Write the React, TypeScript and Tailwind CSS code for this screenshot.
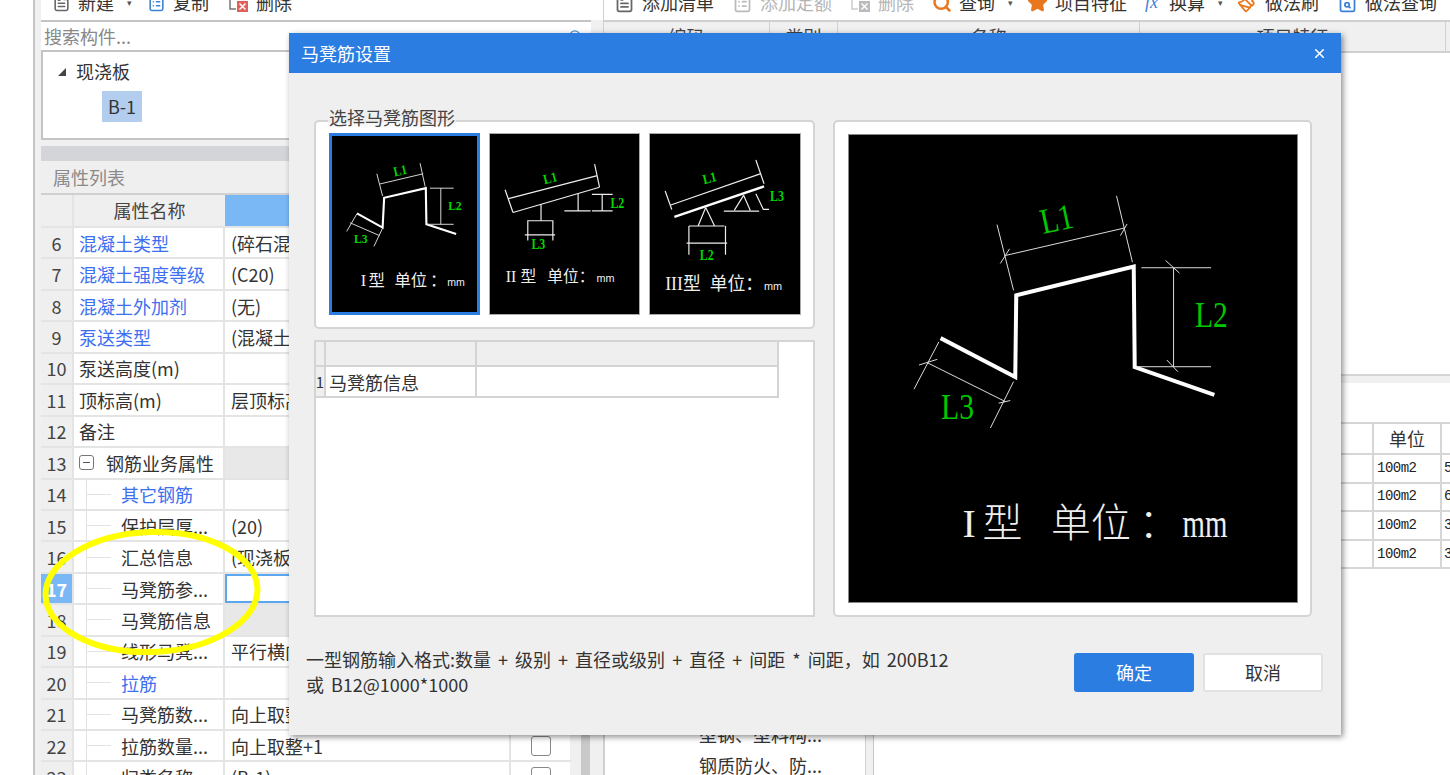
import { FileText, ClipboardList, Search, Star, Paintbrush, FileSearch, X } from "lucide-react";

type Row = {
  n: number;
  name: string;
  value?: string;
  link?: boolean;
  child?: boolean;
  group?: boolean;
  gray?: boolean;
  selected?: boolean;
  check?: boolean;
};

const rows: Row[] = [
  { n: 6, name: "混凝土类型", value: "(碎石混凝土)", link: true },
  { n: 7, name: "混凝土强度等级", value: "(C20)", link: true },
  { n: 8, name: "混凝土外加剂", value: "(无)", link: true },
  { n: 9, name: "泵送类型", value: "(混凝土泵)", link: true },
  { n: 10, name: "泵送高度(m)" },
  { n: 11, name: "顶标高(m)", value: "层顶标高" },
  { n: 12, name: "备注" },
  { n: 13, name: "钢筋业务属性", group: true, gray: true },
  { n: 14, name: "其它钢筋", child: true, link: true },
  { n: 15, name: "保护层厚...", value: "(20)", child: true },
  { n: 16, name: "汇总信息", value: "(现浇板)", child: true },
  { n: 17, name: "马凳筋参...", child: true, selected: true },
  { n: 18, name: "马凳筋信息", child: true, gray: true },
  { n: 19, name: "线形马凳...", value: "平行横向受力筋", child: true },
  { n: 20, name: "拉筋", child: true, link: true },
  { n: 21, name: "马凳筋数...", value: "向上取整+1", child: true },
  { n: 22, name: "拉筋数量...", value: "向上取整+1", child: true, check: true },
  { n: 23, name: "归类名称", value: "(B-1)", child: true, check: true },
];

const units = ["5", "6", "3", "3"];

function DeleteIcon({ muted }: { muted?: boolean }) {
  return (
    <svg width="21" height="21" viewBox="0 0 21 21" className="shrink-0">
      <path d="M2 3H11M2 3V17H8" fill="none" stroke={muted ? "#ccc" : "#777"} strokeWidth="1.5" />
      <rect x="9" y="9" width="11" height="11" fill={muted ? "#bbb" : "#e0605a"} />
      <path d="M11.5 11.5 17.5 17.5M17.5 11.5 11.5 17.5" stroke="#fff" strokeWidth="1.5" />
    </svg>
  );
}

function ToolItem({ icon, label, caret, muted }: { icon: React.ReactNode; label: string; caret?: boolean; muted?: boolean }) {
  return (
    <div className="flex items-center gap-[7px]">
      {icon}
      <span className={muted ? "text-[#b5b5b5]" : "text-[#333]"}>{label}</span>
      {caret && <span className="-mr-[4px] ml-[6px] text-[9px] text-[#555]">▾</span>}
    </div>
  );
}

function PropertyRow({ row }: { row: Row }) {
  return (
    <div className="flex h-[31.45px] shrink-0 border-b-2 border-[#e4e4e4] text-[18px] leading-none">
      <div
        className={`flex w-[33px] shrink-0 items-center justify-center border-r-2 border-[#e4e4e4] ${
          row.selected ? "bg-[#7ab8f5] font-bold text-white" : "bg-[#efefef] text-[#444]"
        }`}
      >
        {row.n}
      </div>
      <div className="flex w-[151px] shrink-0 items-center border-r-2 border-[#e4e4e4] bg-white">
        {row.child && (
          <span className="ml-[12px] flex w-[25px] items-center self-stretch border-l border-[#e3e3e3]">
            <span className="h-px w-full bg-[#e3e3e3]" />
          </span>
        )}
        {row.group && (
          <span className="ml-[5px] flex h-[15px] w-[15px] items-center justify-center rounded-[3px] border border-[#777]">
            <span className="h-px w-[7px] bg-[#555]" />
          </span>
        )}
        <span
          className={`${row.child ? "ml-[10px]" : row.group ? "ml-[12px]" : "ml-[5px]"} whitespace-nowrap ${
            row.link ? "text-[#3d6ff0]" : "text-[#333]"
          }`}
        >
          {row.name}
        </span>
      </div>
      <div
        className={`flex w-[284px] shrink-0 items-center overflow-hidden whitespace-nowrap pl-[6px] text-[#333] ${
          row.gray ? "bg-[#e8e8e8]" : "bg-white"
        } ${row.selected ? "border-2 border-[#5ba7f0]" : ""}`}
      >
        {row.value}
      </div>
      <div className={`flex w-[61px] shrink-0 items-center justify-center border-l-2 border-[#e4e4e4] ${row.gray ? "bg-[#e8e8e8]" : "bg-white"}`}>
        {row.check && <span className="h-[20px] w-[20px] rounded-[3px] border border-[#888] bg-white" />}
      </div>
    </div>
  );
}

// the big drawing has narrow, tall labels, the thumbnails small heavy ones
function Label({ x, y, rotate, size, children }: { x: number; y: number; rotate?: number; size: number; children: string }) {
  const big = size > 20;
  return (
    <text
      x={x}
      y={y}
      fill={big ? "#00c800" : "#00d800"}
      fontSize={size}
      fontWeight={big ? 400 : 700}
      textAnchor="middle"
      textLength={big ? 33 : 14}
      lengthAdjust="spacingAndGlyphs"
      fontFamily="'Liberation Serif', serif"
      transform={rotate ? `rotate(${rotate} ${x} ${y})` : undefined}
    >
      {children}
    </text>
  );
}

function Caption({ parts, y, size, mono }: { parts: [number, string][]; y: number; size: number; mono: number }) {
  const big = size > 20;
  return (
    <g fill="#eee">
      {parts.map(([x, t]) => {
        const isMm = t === "mm";
        const latin = /[Im]/.test(t);
        return (
          <text
            key={t}
            x={x}
            y={y}
            fontSize={isMm ? mono : size}
            textLength={isMm && big ? 45 : undefined}
            lengthAdjust="spacingAndGlyphs"
            fontFamily={
              isMm && !big
                ? "'Liberation Sans', sans-serif"
                : latin
                  ? "'Liberation Serif', serif"
                  : "'Noto Sans CJK SC', sans-serif"
            }
            fontWeight={big ? 300 : 400}
          >
            {t}
          </text>
        );
      })}
    </g>
  );
}

function ShapeOne() {
  return (
    <svg viewBox="0 0 151 182" className="h-full w-full">
      <polyline points="26,80 52.7,94.7 54.3,63.7 97.7,53.7 98.3,91.3 129.3,101.3" fill="none" stroke="#fff" strokeWidth="2.2" />
      <path
        d="M46.7 38.7 52.7 62M91.7 27.7 97 52M50 49.3 95 38.7M102 53.7H126.7M99.3 91.3H126.7M113.3 53.7V91.3M26 80.3 15.3 98.7M52.7 95.3 43.7 114.3M18.7 89.7 49.3 103"
        fill="none"
        stroke="#ddd"
        strokeWidth="1"
      />
      <Label x={72} y={40} rotate={-12} size={14}>L1</Label>
      <Label x={128} y={76} size={14}>L2</Label>
      <Label x={30} y={111} size={14}>L3</Label>
      <Caption y={156} size={17} mono={11} parts={[[30, "I"], [38, "型"], [65, "单位"], [102, "："], [120, "mm"]]} />
    </svg>
  );
}

function ShapeTwo() {
  return (
    <svg viewBox="0 0 151 182" className="h-full w-full">
      <path
        d="M15.3 56.3 23.3 79.3M106 30.3 111 53.7M18.7 65.3 108.7 42M23.3 79.3 111 53.7M51.7 71V87.7M37.7 87.7H64.3M38.3 87.7V107.7M63.7 87.7V107.7M35.3 102H66M89.3 59.7V77.7M75.3 77.7H102M103.3 61H124.3M103.3 77.7H124.3M113.7 61V77.7"
        fill="none"
        stroke="#eee"
        strokeWidth="1.2"
      />
      <Label x={62} y={49} rotate={-14} size={14}>L1</Label>
      <Label x={129} y={75} size={14}>L2</Label>
      <Label x={49} y={116} size={14}>L3</Label>
      <Caption y={150} size={16} mono={11} parts={[[16, "II"], [31, "型"], [58, "单位"], [90, "："], [108, "mm"]]} />
    </svg>
  );
}

function ShapeThree() {
  return (
    <svg viewBox="0 0 151 182" className="h-full w-full">
      <line x1="24.3" y1="83.7" x2="115" y2="53" stroke="#fff" strokeWidth="2.4" />
      <path
        d="M20 72 111 40.3M15 57.7 21.7 76.3M106.7 26.3 115 50.3M56 74.3 48.3 93M56 74.3 65 93M39 93H75M39 93V122M76 93V122M36.7 110.3H77.7M94.3 62 85 77M94.3 62 101 77M74.3 78H110M106.7 60.3 114.3 76.3H120"
        fill="none"
        stroke="#eee"
        strokeWidth="1.2"
      />
      <Label x={61} y={49} rotate={-14} size={14}>L1</Label>
      <Label x={128} y={68} size={14}>L3</Label>
      <Label x={57} y={127} size={14}>L2</Label>
      <Caption y={158} size={18} mono={11} parts={[[15, "III"], [33, "型"], [60, "单位"], [96, "："], [115, "mm"]]} />
    </svg>
  );
}

function LargeShape() {
  return (
    <svg viewBox="0 0 450 469" className="h-full w-full">
      <polyline points="92,204 167,243 168,161 286,132 287,233 367,261" fill="none" stroke="#fff" strokeWidth="4" />
      <path
        d="M148.7 90 165.3 156M268.7 61 284.7 127.7M157 121 277 93.3M152 129 161.3 114.3M272.7 101 279.3 89.3M293.7 133.3H363.7M288.7 232.7H363.7M326 133.3V232.7M318 126 332 138.7M319.3 226 330.3 237.7M90.3 207.7 65.3 255.3M165.3 247.7 142 294.3M78.7 228.7 157 267.7M70.3 231 88.7 225.3M150.3 269.3 162 266.7"
        fill="none"
        stroke="#ddd"
        strokeWidth="1"
      />
      <Label x={211} y={96} rotate={-12} size={36}>L1</Label>
      <Label x={364} y={193} size={36}>L2</Label>
      <Label x={109} y={285} size={36}>L3</Label>
      <Caption y={404} size={40} mono={40} parts={[[114, "I"], [134, "型"], [203, "单位"], [291, "："], [335, "mm"]]} />
    </svg>
  );
}

export default function App() {
  return (
    <div className="relative flex h-[775px] w-[1450px] overflow-hidden bg-white font-['Noto_Sans_CJK_SC','Liberation_Sans',sans-serif]">
      <div className="w-[33px] shrink-0" />

      {/* left column */}
      <div className="flex h-full w-[570px] shrink-0 flex-col border-l-2 border-[#c4c4c4] bg-[#f0f0f0] pl-[6px]">
        <div className="h-[20px] shrink-0 overflow-hidden bg-white pl-[11px] text-[18px]">
          <div className="-mt-[11px] flex items-center gap-[19px]">
            <ToolItem icon={<FileText size={19} className="text-[#666]" />} label="新建" caret />
            <ToolItem icon={<ClipboardList size={19} className="text-[#3b82d6]" />} label="复制" />
            <ToolItem icon={<DeleteIcon />} label="删除" />
          </div>
        </div>
        <div className="flex h-[32px] w-[550px] shrink-0 items-center justify-between border-y-2 border-[#c4c4c4] bg-white pl-[3px] pr-[8px] text-[18px] text-[#888]">
          <span>搜索构件...</span>
          <Search size={15} className="text-[#4a90d9]" />
        </div>
        <div className="h-[88px] w-[550px] shrink-0 border-x-2 border-b-2 border-[#c4c4c4] bg-white text-[18px] text-[#333]">
          <div className="flex items-center pl-[15px] pt-[6px]">
            <span className="h-0 w-0 border-b-[8px] border-l-[8px] border-b-[#444] border-l-transparent" />
            <span className="ml-[10px]">现浇板</span>
          </div>
          <div className="ml-[59px] mt-[6px] flex h-[31px] w-[40px] items-center justify-center bg-[#b3cdee]">B-1</div>
        </div>
        <div className="h-[6px] shrink-0" />
        <div className="h-[15px] w-[550px] shrink-0 bg-[#d3d5d9]" />
        <div className="flex h-[34px] w-[530px] shrink-0 items-center border-b-2 border-[#d0d0d0] bg-[#efefef] pl-[12px] text-[18px] text-[#8a8a8a]">
          属性列表
        </div>
        <div className="flex min-h-0 flex-1 gap-[10px]">
          <div className="flex w-[530px] flex-col">
            <div className="flex h-[33px] shrink-0 border-b-2 border-[#e4e4e4] text-[18px] text-[#444]">
              <div className="w-[33px] shrink-0 border-r-2 border-[#e4e4e4] bg-[#efefef]" />
              <div className="flex w-[151px] shrink-0 items-center justify-center bg-[#efefef]">属性名称</div>
              <div className="flex-1 bg-[#7ab8f5]" />
            </div>
            {rows.map((row) => (
              <PropertyRow key={row.n} row={row} />
            ))}
          </div>
          <div className="w-[9px] bg-[#c9c9c9]" />
        </div>
      </div>

      {/* right column */}
      <div className="flex h-full min-w-0 flex-1 flex-col border-l border-[#d0d0d0]">
        <div className="h-[20px] shrink-0 overflow-hidden pl-[10px] text-[18px]">
          <div className="-mt-[11px] flex items-center gap-[18px] whitespace-nowrap">
            <ToolItem icon={<FileText size={21} className="text-[#666]" />} label="添加清单" />
            <ToolItem icon={<ClipboardList size={21} className="text-[#bbb]" />} label="添加定额" muted />
            <ToolItem icon={<DeleteIcon muted />} label="删除" muted />
            <ToolItem icon={<Search size={20} strokeWidth={3} className="text-[#e8771d]" />} label="查询" caret />
            <ToolItem icon={<Star size={21} className="fill-[#e8771d] text-[#e8771d]" />} label="项目特征" />
            <ToolItem icon={<span className="w-[17px] font-['Liberation_Serif',serif] italic text-[#3b82d6]">fx</span>} label="换算" caret />
            <ToolItem icon={<Paintbrush size={21} className="text-[#e8771d]" />} label="做法刷" />
            <ToolItem icon={<FileSearch size={21} className="text-[#3b82d6]" />} label="做法查询" />
          </div>
        </div>
        <div className="flex h-[33px] shrink-0 border-y-2 border-[#d0d0d0] bg-[#f0f0f0] text-[18px] text-[#444]">
          <div className="flex w-[166px] shrink-0 items-center justify-center border-r border-[#d0d0d0]">编码</div>
          <div className="flex w-[68px] shrink-0 items-center justify-center border-r border-[#d0d0d0]">类别</div>
          <div className="flex w-[302px] shrink-0 items-center justify-center border-r border-[#d0d0d0]">名称</div>
          <div className="flex w-[306px] shrink-0 items-center justify-center border-r border-[#d0d0d0]">项目特征</div>
        </div>
        <div className="h-[323px] shrink-0 border-b-2 border-[#d6d6d6]" />
        <div className="h-[7px] shrink-0 bg-[#f0f0f0]" />
        <div className="flex min-h-0 flex-1">
          <div className="w-[262px] shrink-0 border-x border-[#d0d0d0] pl-[94px] pt-[336px] text-[18px] leading-[31px] text-[#333]">
            <div className="whitespace-nowrap">型钢、型料构...</div>
            <div className="whitespace-nowrap">钢质防火、防...</div>
          </div>
          <div className="w-[8px] shrink-0 border-r border-[#c8c8c8] bg-[#f0f0f0]" />
          <div className="min-w-0 flex-1 pt-[39px]">
            <div className="flex h-[33px] border-y-2 border-[#d6d6d6] text-[18px] text-[#333]">
              <div className="w-[498px] shrink-0" />
              <div className="flex w-[70px] shrink-0 items-center justify-center border-x-2 border-[#d6d6d6]">单位</div>
            </div>
            {units.map((u, i) => (
              <div key={i} className="flex h-[28.6px] border-b-2 border-[#d6d6d6] text-[14px] text-[#222]">
                <div className="w-[498px] shrink-0" />
                <div className="flex w-[70px] shrink-0 items-center border-x-2 border-[#d6d6d6] pl-[3px] font-['Liberation_Mono',monospace] tracking-[-0.5px]">
                  100m2
                </div>
                <div className="flex items-center pl-[2px] font-['Liberation_Mono',monospace]">{u}</div>
              </div>
            ))}
          </div>
        </div>
      </div>

      {/* yellow hand drawn ring */}
      <svg className="absolute left-[40px] top-[525px] h-[135px] w-[225px]" viewBox="0 0 225 135">
        <ellipse cx="111.5" cy="67" rx="106" ry="60" fill="none" stroke="#ffff00" strokeWidth="6" transform="rotate(-2 111.5 67)" />
      </svg>

      {/* dialog */}
      <div className="absolute left-[289px] top-[33px] flex h-[702px] w-[1052px] flex-col bg-[#efefef] shadow-[2px_2px_6px_rgba(0,0,0,0.45)]">
        <div className="flex h-[40px] shrink-0 items-center justify-between bg-[#2b7de1] pl-[12px] pr-[14px] text-[18px] text-white">
          <span>马凳筋设置</span>
          <X size={15} strokeWidth={2.5} />
        </div>
        <div className="flex gap-[18px] pl-[25px] pt-[47px]">
          <div className="flex w-[501px] flex-col gap-[11px]">
            <div className="relative flex h-[209px] gap-[9px] rounded-[5px] border-2 border-[#d4d4d4] bg-white pl-[13px] pt-[11px]">
              <span className="absolute -top-[17px] left-[12px] bg-gradient-to-b from-[#efefef] from-60% to-transparent px-px text-[18px] leading-[24px] text-[#444]">
                选择马凳筋图形
              </span>
              <div className="h-[182px] w-[151px] border-[3px] border-[#2b7de1] bg-black">
                <ShapeOne />
              </div>
              <div className="h-[182px] w-[151px] border border-[#aaa] bg-black">
                <ShapeTwo />
              </div>
              <div className="h-[182px] w-[152px] border border-[#aaa] bg-black">
                <ShapeThree />
              </div>
            </div>
            <div className="h-[277px] border-2 border-[#d4d4d4] bg-white">
              <div className="flex h-[25px] w-[463px] border-b-2 border-r-2 border-[#d4d4d4] bg-[#efefef]">
                <div className="w-[10px] border-r-2 border-[#d4d4d4]" />
                <div className="w-[151px] border-r-2 border-[#d4d4d4]" />
              </div>
              <div className="flex h-[31px] w-[463px] border-b-2 border-r-2 border-[#d4d4d4] text-[18px] leading-none text-[#333]">
                <div className="flex w-[10px] items-center justify-center border-r-2 border-[#d4d4d4] bg-[#efefef] text-[15px]">1</div>
                <div className="flex w-[151px] items-center border-r-2 border-[#d4d4d4] pl-[3px]">马凳筋信息</div>
              </div>
            </div>
          </div>
          <div className="flex h-[497px] w-[479px] items-center justify-center rounded-[5px] border-2 border-[#d4d4d4] bg-white">
            <div className="h-[469px] w-[450px] border border-[#888] bg-black">
              <LargeShape />
            </div>
          </div>
        </div>
        <div className="flex flex-1 items-start pl-[17px] pr-[18px] pt-[30px]">
          <p className="w-[700px] whitespace-nowrap text-[18px] leading-[25px] text-[#333] [word-spacing:3px]">
            一型钢筋输入格式:数量 + 级别 + 直径或级别 + 直径 + 间距 * 间距，如 200B12
            <br />
            或 B12@1000*1000
          </p>
          <div className="ml-auto mt-[6px] flex gap-[9px] text-[18px]">
            <button className="h-[39px] w-[120px] rounded-[3px] bg-[#2b7de1] text-white">确定</button>
            <button className="h-[39px] w-[120px] rounded-[3px] border-2 border-[#e2e2e2] bg-white text-[#333]">取消</button>
          </div>
        </div>
      </div>
    </div>
  );
}
